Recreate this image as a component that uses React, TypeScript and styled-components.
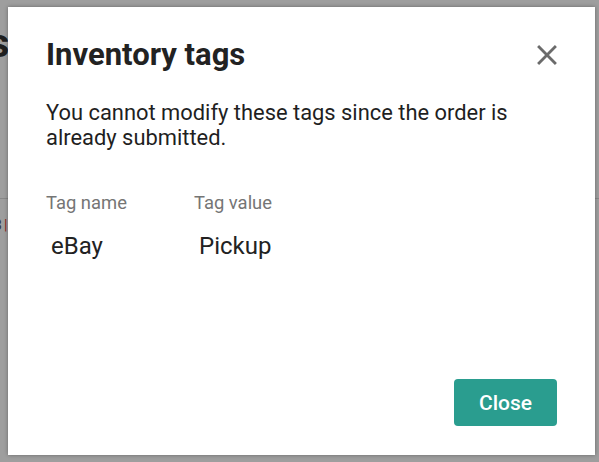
import styled, { createGlobalStyle } from "styled-components";

const GlobalStyle = createGlobalStyle`
  html, body {
    margin: 0;
    padding: 0;
    background: #ffffff;
    font-family: Roboto, "Liberation Sans", Arial, sans-serif;
  }
`;

const Page = styled.div`
  width: 599px;
  height: 462px;
  position: relative;
  overflow: hidden;
  background: #ffffff;
`;

const PageHeading = styled.h1`
  margin: 20px 0 0 -112px;
  font-size: 40px;
  font-weight: 700;
  color: #333;
  line-height: 48px;
`;

const PageDivider = styled.div`
  margin-top: 130px;
  height: 1px;
  background: #dcdcdc;
`;

const PageCell = styled.div`
  margin: 18px 0 0 -6px;
  font-size: 14px;
  color: #555;
  span {
    color: #e53935;
    margin-left: 2px;
  }
`;

const Overlay = styled.div`
  position: absolute;
  inset: 0;
  background: rgba(0, 0, 0, 0.38);
  display: flex;
  padding: 7px 4px 7px 8px;
`;

const Dialog = styled.div`
  flex: 1;
  background: #ffffff;
  box-shadow: 0 0 4px rgba(0, 0, 0, 0.35);
  display: flex;
  flex-direction: column;
  padding: 30px 38px 29px 38px;
`;

const Header = styled.div`
  display: flex;
  justify-content: space-between;
  align-items: flex-start;
`;

const Title = styled.h2`
  margin: 0;
  font-size: 31px;
  line-height: 36px;
  font-weight: 700;
  color: #222222;
`;

const IconButton = styled.button`
  border: none;
  background: none;
  padding: 0;
  margin: 1px -7px 0 0;
  width: 34px;
  height: 34px;
  color: #6b6b6b;
  cursor: pointer;
  svg {
    display: block;
  }
`;

const Message = styled.p`
  margin: 27px 0 0 0;
  font-size: 21.9px;
  line-height: 25px;
  color: #1f1f1f;
`;

const TagGrid = styled.div`
  margin-top: 42px;
  display: grid;
  grid-template-columns: 148px auto;
  row-gap: 17px;
`;

const Label = styled.div`
  font-size: 18.4px;
  line-height: 22px;
  color: #757575;
`;

const Value = styled.div`
  font-size: 24px;
  line-height: 30px;
  color: #222222;
  padding-left: 5px;
`;

const Footer = styled.div`
  margin-top: auto;
  display: flex;
  justify-content: flex-end;
`;

const PrimaryButton = styled.button`
  width: 103px;
  height: 47px;
  border: none;
  border-radius: 4px;
  background: #2a9d8f;
  color: #ffffff;
  font-family: Roboto, "Liberation Sans", Arial, sans-serif;
  font-size: 21px;
  font-weight: 500;
  cursor: pointer;
`;

const tags = [{ name: "eBay", value: "Pickup" }];

function CloseIcon() {
  return (
    <svg width="34" height="34" viewBox="0 0 24 24" fill="currentColor">
      <path d="M19 6.41L17.59 5 12 10.59 6.41 5 5 6.41 10.59 12 5 17.59 6.41 19 12 13.41 17.59 19 19 17.59 13.41 12z" />
    </svg>
  );
}

export default function App() {
  return (
    <>
      <GlobalStyle />
      <Page>
        <PageHeading>Orders</PageHeading>
        <PageDivider />
        <PageCell>
          3<span>|</span>
        </PageCell>
        <Overlay>
          <Dialog>
            <Header>
              <Title>Inventory tags</Title>
              <IconButton aria-label="Close">
                <CloseIcon />
              </IconButton>
            </Header>
            <Message>
              You cannot modify these tags since the order is already
              submitted.
            </Message>
            <TagGrid>
              <Label>Tag name</Label>
              <Label>Tag value</Label>
              {tags.map((t) => (
                <>
                  <Value key={t.name}>{t.name}</Value>
                  <Value key={t.value}>{t.value}</Value>
                </>
              ))}
            </TagGrid>
            <Footer>
              <PrimaryButton>Close</PrimaryButton>
            </Footer>
          </Dialog>
        </Overlay>
      </Page>
    </>
  );
}
